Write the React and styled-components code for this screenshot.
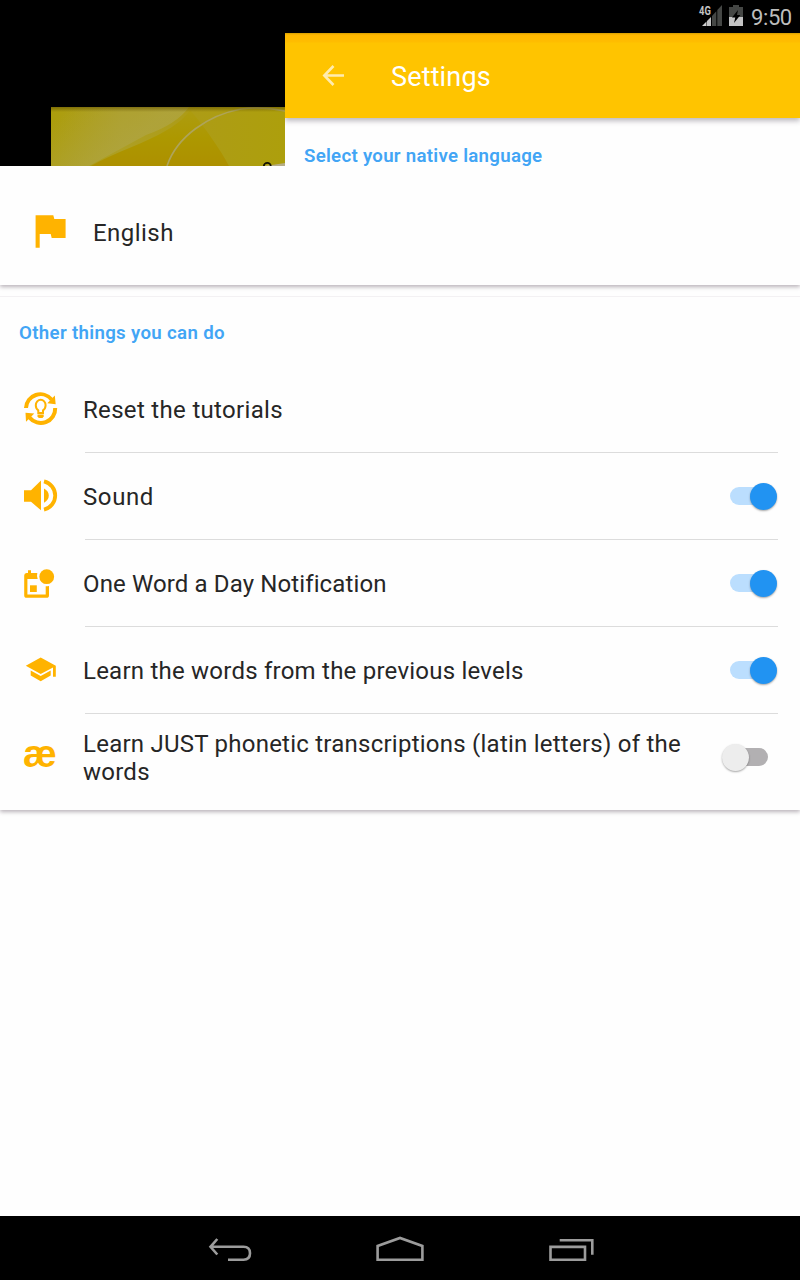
import React from "react";
import styled, { createGlobalStyle } from "styled-components";

const Global = createGlobalStyle`
  * { box-sizing: border-box; }
  html, body { margin: 0; padding: 0; background: #fefefe; }
  body { font-family: Roboto, "Liberation Sans", sans-serif; }
  svg { display: block; }
`;

const Screen = styled.div`
  width: 800px;
  height: 1280px;
  display: flex;
  flex-direction: column;
  overflow: hidden;
  background: #fefefe;
`;

const StatusBar = styled.div`
  height: 33px;
  flex: none;
  display: flex;
  justify-content: flex-end;
  background: #000;
`;

const Clock = styled.span`
  width: 41px;
  margin: 0 8px 0 6px;
  font-size: 22px;
  line-height: 35px;
  letter-spacing: -0.4px;
  white-space: nowrap;
  color: #bdbdbd;
`;

const Top = styled.div`
  display: grid;
  grid-template-columns: 285px 1fr;
  height: 133px;
  flex: none;
`;

const Backdrop = styled.div`
  padding: 74px 0 0 51px;
  background: #000;
`;

const Panel = styled.div`
  display: flex;
  flex-direction: column;
`;

const AppBar = styled.header`
  height: 85px;
  flex: none;
  display: flex;
  align-items: center;
  padding-left: 36px;
  color: #fff;
  background: linear-gradient(#d69f00 0, #ffb800 2px, #ffbd00 9px, #ffc400 10px);
  box-shadow: 0 3px 5px rgba(40, 30, 50, 0.3);
  clip-path: inset(0 0 -12px 0);
`;

const Title = styled.h1`
  margin: 3px 0 0 45px;
  font-size: 27px;
  font-weight: 400;
  line-height: 32px;
  letter-spacing: 0.15px;
`;

const SectionTitle = styled.h2`
  margin: 0;
  padding-left: 19px;
  font-size: 18.67px;
  font-weight: 600;
  line-height: 22px;
  padding-top: ${(p) => p.$top}px;
  height: ${(p) => p.$height}px;
  letter-spacing: ${(p) => p.$spacing}px;
  color: #42a5f5;
`;

const Card = styled.section`
  flex: none;
  box-shadow: 0 2px 4px rgba(50, 30, 50, 0.33);
`;

const LanguageCard = styled(Card)`
  height: 119px;
  display: flex;
  align-items: center;
  padding: 10px 0 0 30px;
  clip-path: inset(0 0 -10px 0);
`;

const OptionsCard = styled(Card)`
  margin-top: 11px;
  height: 514px;
  border-top: 1px solid #f3f1f3;
  clip-path: inset(0 0 -10px 0);
`;

const Label = styled.span`
  font-size: 24px;
  line-height: 28px;
  color: #262626;
  letter-spacing: ${(p) => p.$spacing}px;
`;

const LanguageLabel = styled(Label)`
  padding: 5px 0 0 23px;
`;

const Row = styled.div`
  height: ${(p) => p.$height || 87}px;
  display: grid;
  grid-template-columns: 65px 1fr;
  padding: 0 22px 0 20px;
`;

const IconCell = styled.div`
  padding-top: 23px;
`;

const RowBody = styled.div`
  display: flex;
  justify-content: space-between;
  align-items: flex-start;
  padding-top: ${(p) => p.$top || 30}px;
  border-bottom: ${(p) => (p.$last ? "none" : "1px solid #dcdcdc")};
`;

const RowLabel = styled(Label)`
  margin-left: -2px;
  white-space: pre-line;
`;

const Glyph = styled.div`
  margin: -3px 0 0 3px;
  width: 40px;
  height: 40px;
  font: 700 38px/40px "Liberation Sans", sans-serif;
  color: #ffb300;
`;

const Track = styled.div`
  width: 38px;
  height: 18px;
  flex: none;
  display: flex;
  align-items: center;
  justify-content: ${(p) => (p.$on ? "flex-end" : "flex-start")};
  margin: ${(p) => (p.$on ? 4 : 18)}px 10px 0 0;
  border-radius: 9px;
  background: ${(p) => (p.$on ? "#bbdefe" : "#b2b0b2")};
`;

const Thumb = styled.div`
  width: 27px;
  height: 27px;
  flex: none;
  margin: ${(p) => (p.$on ? "0 -8.5px 0 0" : "0 0 0 -8.5px")};
  border-radius: 50%;
  background: ${(p) => (p.$on ? "#2193f2" : "#ededed")};
  box-shadow: 0 1px 2px rgba(0, 0, 0, 0.35);
`;

const NavBar = styled.nav`
  height: 64px;
  flex: none;
  margin-top: auto;
  background: #000;
`;

const AMBER = "#ffb300";

const StatusIcons = () => (
  <svg width="48" height="33" viewBox="697 0 48 33">
    <path d="M702 26L706.5 21.5V26Z" fill="#d0d0d0" />
    <path d="M707 21L711 17V26H707Z" fill="#c4c4c4" />
    <path d="M712 16L716.3 11.3V26H712ZM717.3 10L722 5V26H717.3Z" fill="#454745" />
    <text transform="translate(699 15.3) scale(0.82 1.12)" fontSize="11.5" fontWeight="700" fill="#c4c4c4">4G</text>
    <path d="M729 7H733V5H739V7H743V17H729Z" fill="#454745" />
    <path d="M729 17H743V26H729Z" fill="#c4c4c4" />
    <path d="M738 10L732 17.5H735.3L734 23L740.4 15H737Z" fill="#000" />
  </svg>
);

const Artwork = () => (
  <svg width="234" height="59" viewBox="0 0 234 59">
    <defs>
      <linearGradient id="base" x1="0" y1="0" x2="1" y2="0">
        <stop offset="0" stopColor="#ac9d0c" />
        <stop offset="0.3" stopColor="#ad9f25" />
        <stop offset="0.6" stopColor="#ad9c16" />
        <stop offset="1" stopColor="#ad9f0c" />
      </linearGradient>
      <linearGradient id="wave" x1="0" y1="0" x2="0" y2="1">
        <stop offset="0" stopColor="#ad9c10" />
        <stop offset="0.5" stopColor="#ad9800" />
        <stop offset="1" stopColor="#ad9000" />
      </linearGradient>
      <linearGradient id="shade" x1="0" y1="0" x2="0" y2="1">
        <stop offset="0" stopColor="#604f00" stopOpacity="0.6" />
        <stop offset="1" stopColor="#604f00" stopOpacity="0" />
      </linearGradient>
      <linearGradient id="glow" gradientUnits="userSpaceOnUse" x1="20" y1="0" x2="60" y2="50">
        <stop offset="0" stopColor="#afa440" stopOpacity="0" />
        <stop offset="1" stopColor="#afa440" stopOpacity="0.8" />
      </linearGradient>
    </defs>
    <path d="M0 0H234V59H0Z" fill="url(#base)" />
    <path d="M0 0H138Q126 17 95 28L38 59H0Z" fill="url(#glow)" />
    <path d="M40 59C62 46 95 36 116 23C128 16 135 9 139 3C152 18 170 43 178 59Z" fill="url(#wave)" />
    <path d="M116 59C126 29 158 8 190 2Q211 -1 234 4" fill="none" stroke="#aea45a" strokeWidth="1.6" />
    <path d="M212 59Q222 58 234 56V59Z" fill="#b6ad87" />
    <path d="M0 0H234V5H0Z" fill="url(#shade)" />
    <circle cx="216.3" cy="59.3" r="3.5" fill="none" stroke="#131100" strokeWidth="1.8" />
  </svg>
);

const BackArrow = () => (
  <svg width="25" height="25" viewBox="0 0 25 25">
    <path d="M23 12.5H4M12.5 3L3.3 12.5L12.5 22" fill="none" stroke="#ffecb0" strokeWidth="2.6" />
  </svg>
);

const FlagIcon = () => (
  <svg width="40" height="40" viewBox="30 211 40 40">
    <path d="M35.6 215.3H53.3L54.3 219H65.6V238H51.7L50.7 234H39.7V247.7H35.6Z" fill={AMBER} />
  </svg>
);

const ResetIcon = () => (
  <svg width="40" height="40" viewBox="0 0 40 40" fill="none" stroke={AMBER}>
    <path d="M6 19A14.4 14.4 0 0 1 31.5 10.5M35.2 19A14.4 14.4 0 0 1 9.5 28.5" strokeWidth="4" />
    <path d="M34.8 6.5L35.7 15.2L27.3 14.3ZM6 32.7L5.5 23.7L14.3 24.5Z" fill={AMBER} stroke="none" />
    <path d="M18.3 24V21.4C16.6 20.2 15.8 18.4 15.8 16.2A4.9 5.5 0 0 1 25.6 16.2C25.6 18.4 24.7 20.2 23 21.4V24Z" strokeWidth="2" />
    <path d="M17.5 25.6H23.7V27.2L22.6 29H18.7L17.5 27.2Z" fill={AMBER} stroke="none" />
  </svg>
);

const SoundIcon = () => (
  <svg width="40" height="40" viewBox="0 0 40 40" fill={AMBER}>
    <path d="M4 14.3H11L21 4.5V34.3L11 25.7H4ZM24 12.5Q28.8 15 28.8 19.6T24 26.7Z" />
    <path d="M24 5.3A14.6 14.6 0 0 1 24 33.7" fill="none" stroke={AMBER} strokeWidth="3.8" />
  </svg>
);

const CalendarIcon = () => (
  <svg width="40" height="40" viewBox="0 0 40 40" fill={AMBER}>
    <path d="M6.5 10H8V7.3H11V10H17.3A9.6 9.6 0 0 0 17.7 16H7.4V31.5H25.7V23.3Q27.3 23.4 29 22.9V32.2Q29 34.8 26.5 34.8H6.6Q4.2 34.8 4.2 32.2V12.5Q4.2 10.4 6.5 10Z" />
    <path d="M10 22.3H16.8V29H10Z" />
    <circle cx="26.7" cy="13.7" r="7.4" />
  </svg>
);

const SchoolIcon = () => (
  <svg width="40" height="40" viewBox="0 0 40 40" fill={AMBER}>
    <path d="M5.8 15.8L20.7 7.5L35.8 15.8V26.7H33V17.4L20.7 24Z" />
    <path d="M10.7 20.4L20.7 26L30.7 20.4V25.6L20.7 31.3L10.7 25.6Z" />
  </svg>
);

const NavIcons = () => (
  <svg width="800" height="64" viewBox="0 1216 800 64" fill="none" stroke="#9c9c9c" strokeWidth="2.6">
    <path d="M217.3 1239L210.5 1246.8L217.3 1254.5M210 1246.8H243.5Q250 1246.8 250 1253.2T243.5 1259.7H228" />
    <path d="M377.6 1259.7V1245.9L400 1238L422.4 1245.9V1259.7Z" />
    <path d="M550.5 1246.9H585V1259.7H550.5ZM559.7 1240.2H592.3V1254.7" />
  </svg>
);

const Toggle = ({ on }) => (
  <Track $on={on}>
    <Thumb $on={on} />
  </Track>
);

const options = [
  { label: "Reset the tutorials", icon: <ResetIcon />, spacing: 0.32 },
  { label: "Sound", icon: <SoundIcon />, spacing: 0.6, on: true },
  { label: "One Word a Day Notification", icon: <CalendarIcon />, spacing: 0.12, on: true },
  { label: "Learn the words from the previous levels", icon: <SchoolIcon />, spacing: 0.23, on: true },
  {
    label: "Learn JUST phonetic transcriptions (latin letters) of the\nwords",
    icon: <Glyph>æ</Glyph>,
    spacing: 0.24,
    on: false,
    top: 16,
    height: 96,
  },
];

export default function App() {
  return (
    <Screen>
      <Global />
      <StatusBar>
        <StatusIcons />
        <Clock>9:50</Clock>
      </StatusBar>
      <Top>
        <Backdrop>
          <Artwork />
        </Backdrop>
        <Panel>
          <AppBar>
            <BackArrow />
            <Title>Settings</Title>
          </AppBar>
          <SectionTitle $top={27} $height={48} $spacing={0.28}>
            Select your native language
          </SectionTitle>
        </Panel>
      </Top>
      <LanguageCard>
        <FlagIcon />
        <LanguageLabel $spacing={0.45}>English</LanguageLabel>
      </LanguageCard>
      <OptionsCard>
        <SectionTitle $top={25} $height={69} $spacing={0.33}>
          Other things you can do
        </SectionTitle>
        {options.map((o, i) => (
          <Row key={o.label} $height={o.height}>
            <IconCell>{o.icon}</IconCell>
            <RowBody $top={o.top} $last={i === options.length - 1}>
              <RowLabel $spacing={o.spacing}>{o.label}</RowLabel>
              {o.on !== undefined && <Toggle on={o.on} />}
            </RowBody>
          </Row>
        ))}
      </OptionsCard>
      <NavBar>
        <NavIcons />
      </NavBar>
    </Screen>
  );
}
